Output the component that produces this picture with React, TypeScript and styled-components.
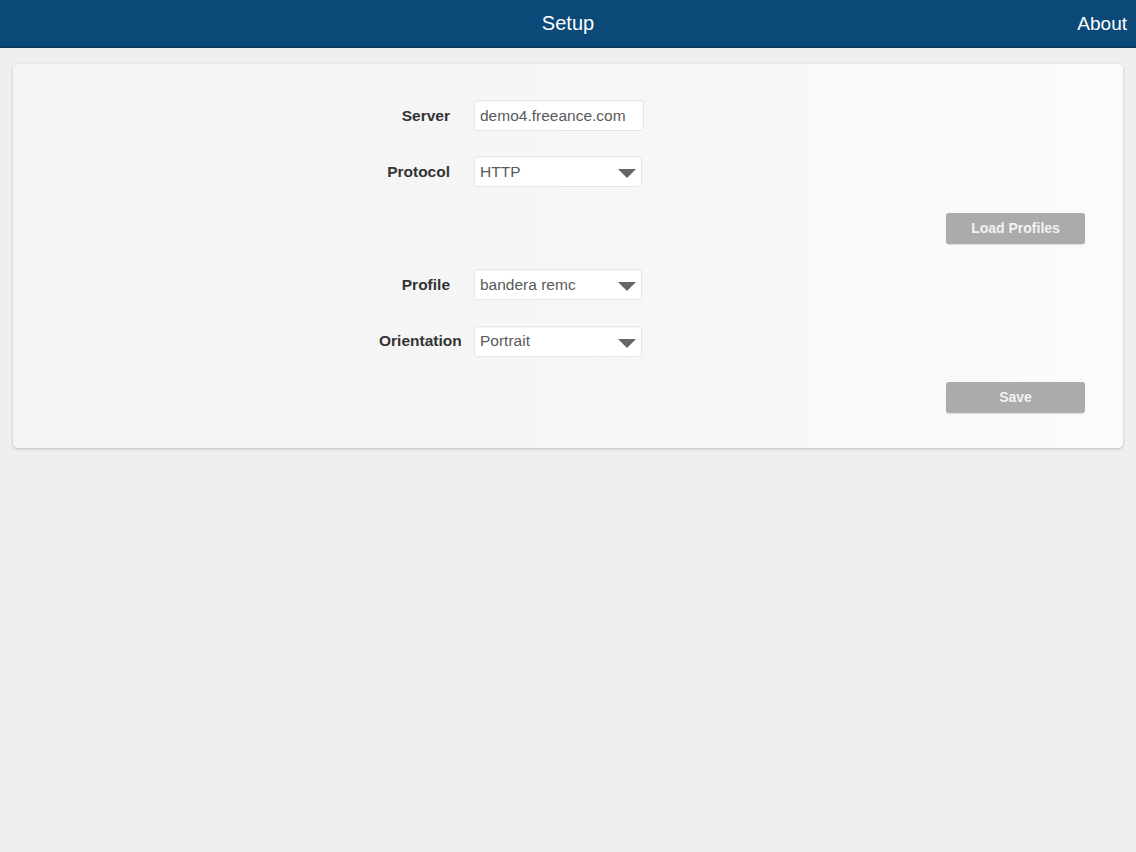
import styled, { createGlobalStyle } from 'styled-components'

const GlobalStyle = createGlobalStyle`
  html, body {
    margin: 0;
    padding: 0;
    background: #efeff0;
    font-family: "Liberation Sans", Arial, sans-serif;
  }
`

const Page = styled.div`
  width: 1136px;
  min-height: 852px;
  background: #efeff0;
`

const Header = styled.div`
  height: 46px;
  background: #0b4a78;
  border-bottom: 2px solid #0a3a5e;
  display: grid;
  grid-template-columns: 1fr auto 1fr;
  align-items: center;
  color: #fff;
`

const HeaderTitle = styled.div`
  font-size: 20px;
  padding-top: 1px;
`

const HeaderLink = styled.div`
  justify-self: end;
  padding-right: 9px;
  padding-top: 1px;
  font-size: 19px;
`

const Main = styled.div`
  padding: 16px 13px;
`

const Card = styled.div`
  background: linear-gradient(to right, #f4f4f5 0%, #f6f6f7 50%, #fbfbfc 100%);
  border-radius: 5px;
  box-shadow: 0 1px 3px rgba(0, 0, 0, 0.22);
  padding: 36px 38px 35.5px 0;
  display: flex;
  flex-direction: column;
  gap: 25.4px;
`

const FieldRow = styled.div`
  display: grid;
  grid-template-columns: 71px 170px;
  column-gap: 24px;
  align-items: center;
  padding-left: 366px;
  height: 31px;
`

const Label = styled.div`
  font-size: 15.5px;
  font-weight: bold;
  color: #333;
  text-align: right;
  white-space: nowrap;
`

const Field = styled.div<{ $select?: boolean }>`
  height: 31px;
  width: ${p => (p.$select ? '168px' : '170px')};
  box-sizing: border-box;
  background: #fff;
  border: 1px solid #e6e6e8;
  border-radius: 3px;
  box-shadow: inset 0 1px 1px rgba(0, 0, 0, 0.04);
  display: flex;
  align-items: center;
  justify-content: space-between;
  padding: 0 5px 0 5px;
  font-size: 15.5px;
  color: #5a5a5a;
`

const Arrow = styled.span`
  width: 0;
  height: 0;
  border-left: 9px solid transparent;
  border-right: 9px solid transparent;
  border-top: 9px solid #666;
  margin-top: 4px;
`

const ButtonRow = styled.div`
  display: flex;
  justify-content: flex-end;
  height: 31px;
  align-items: center;
`

const Button = styled.button`
  width: 139px;
  height: 31px;
  border: none;
  border-radius: 3px;
  background: #ababab;
  color: #f2f2f2;
  font-family: "Liberation Sans", Arial, sans-serif;
  font-size: 14px;
  font-weight: bold;
  box-shadow: 0 1px 1px rgba(0, 0, 0, 0.12);
`

const fields1 = [
  { label: 'Server', value: 'demo4.freeance.com', select: false },
  { label: 'Protocol', value: 'HTTP', select: true },
]

const fields2 = [
  { label: 'Profile', value: 'bandera remc', select: true },
  { label: 'Orientation', value: 'Portrait', select: true },
]

function Row({ label, value, select }: { label: string; value: string; select: boolean }) {
  return (
    <FieldRow>
      <Label>{label}</Label>
      <Field $select={select}>
        <span>{value}</span>
        {select && <Arrow />}
      </Field>
    </FieldRow>
  )
}

export default function App() {
  return (
    <>
      <GlobalStyle />
      <Page>
        <Header>
          <span />
          <HeaderTitle>Setup</HeaderTitle>
          <HeaderLink>About</HeaderLink>
        </Header>
        <Main>
          <Card>
            {fields1.map(f => (
              <Row key={f.label} {...f} />
            ))}
            <ButtonRow>
              <Button>Load Profiles</Button>
            </ButtonRow>
            {fields2.map(f => (
              <Row key={f.label} {...f} />
            ))}
            <ButtonRow>
              <Button>Save</Button>
            </ButtonRow>
          </Card>
        </Main>
      </Page>
    </>
  )
}
